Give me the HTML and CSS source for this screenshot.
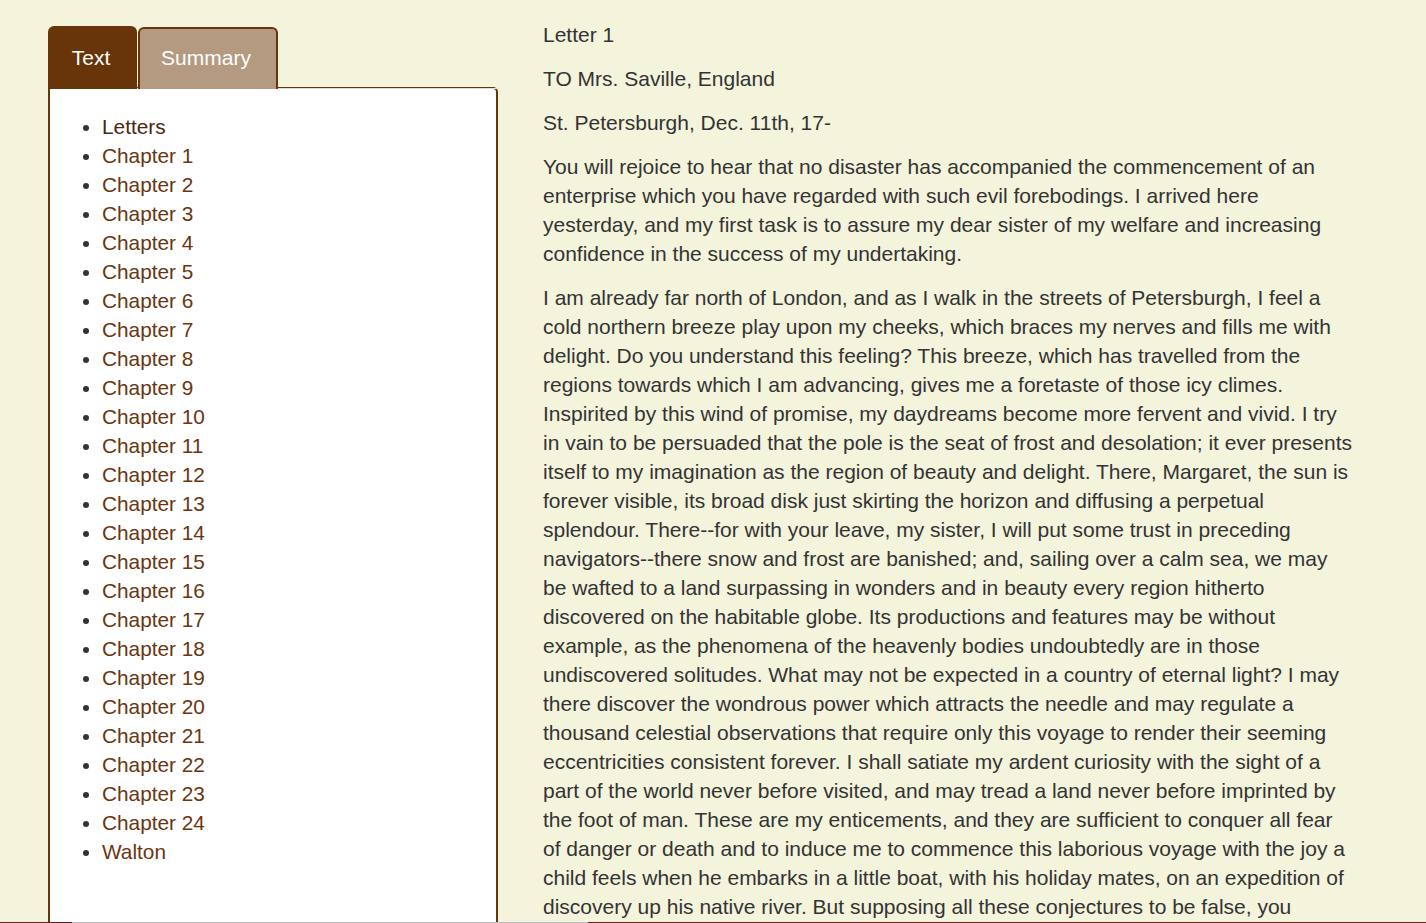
FILE: index.html
```html
<!DOCTYPE html>
<html lang="en">
<head>
<meta charset="utf-8">
<title>Frankenstein - Letter 1</title>
<link rel="stylesheet" href="styles.css">
</head>
<body>
<div class="page">
  <aside class="sidebar">
    <div class="tabs">
      <div class="tab tab-active">Text</div>
      <div class="tab tab-inactive">Summary</div>
    </div>
    <div class="panel">
      <ul class="toc">
        <li><a class="current" href="#">Letters</a></li>
        <li><a href="#">Chapter 1</a></li>
        <li><a href="#">Chapter 2</a></li>
        <li><a href="#">Chapter 3</a></li>
        <li><a href="#">Chapter 4</a></li>
        <li><a href="#">Chapter 5</a></li>
        <li><a href="#">Chapter 6</a></li>
        <li><a href="#">Chapter 7</a></li>
        <li><a href="#">Chapter 8</a></li>
        <li><a href="#">Chapter 9</a></li>
        <li><a href="#">Chapter 10</a></li>
        <li><a href="#">Chapter 11</a></li>
        <li><a href="#">Chapter 12</a></li>
        <li><a href="#">Chapter 13</a></li>
        <li><a href="#">Chapter 14</a></li>
        <li><a href="#">Chapter 15</a></li>
        <li><a href="#">Chapter 16</a></li>
        <li><a href="#">Chapter 17</a></li>
        <li><a href="#">Chapter 18</a></li>
        <li><a href="#">Chapter 19</a></li>
        <li><a href="#">Chapter 20</a></li>
        <li><a href="#">Chapter 21</a></li>
        <li><a href="#">Chapter 22</a></li>
        <li><a href="#">Chapter 23</a></li>
        <li><a href="#">Chapter 24</a></li>
        <li><a href="#">Walton</a></li>
      </ul>
    </div>
  </aside>
  <main class="content">
    <p>Letter 1</p>
    <p>TO Mrs. Saville, England</p>
    <p>St. Petersburgh, Dec. 11th, 17-</p>
    <p>You will rejoice to hear that no disaster has accompanied the commencement of an enterprise which you have regarded with such evil forebodings. I arrived here yesterday, and my first task is to assure my dear sister of my welfare and increasing confidence in the success of my undertaking.</p>
    <p>I am already far north of London, and as I walk in the streets of Petersburgh, I feel a cold northern breeze play upon my cheeks, which braces my nerves and fills me with delight. Do you understand this feeling? This breeze, which has travelled from the regions towards which I am advancing, gives me a foretaste of those icy climes. Inspirited by this wind of promise, my daydreams become more fervent and vivid. I try in vain to be persuaded that the pole is the seat of frost and desolation; it ever presents itself to my imagination as the region of beauty and delight. There, Margaret, the sun is forever visible, its broad disk just skirting the horizon and diffusing a perpetual splendour. There--for with your leave, my sister, I will put some trust in preceding navigators--there snow and frost are banished; and, sailing over a calm sea, we may be wafted to a land surpassing in wonders and in beauty every region hitherto discovered on the habitable globe. Its productions and features may be without example, as the phenomena of the heavenly bodies undoubtedly are in those undiscovered solitudes. What may not be expected in a country of eternal light? I may there discover the wondrous power which attracts the needle and may regulate a thousand celestial observations that require only this voyage to render their seeming eccentricities consistent forever. I shall satiate my ardent curiosity with the sight of a part of the world never before visited, and may tread a land never before imprinted by the foot of man. These are my enticements, and they are sufficient to conquer all fear of danger or death and to induce me to commence this laborious voyage with the joy a child feels when he embarks in a little boat, with his holiday mates, on an expedition of discovery up his native river. But supposing all these conjectures to be false, you cannot contest the inestimable benefit which I shall confer on all mankind, to the last generation, by discovering a passage near the pole to those countries, to reach which at present so many months are requisite; or by ascertaining the secret of the magnet, which, if at all possible, can only be effected by an undertaking such as mine.</p>
  </main>
</div>
<div class="footer-line"></div>
</body>
</html>
```

FILE: styles.css
```css
html, body {
  margin: 0;
  padding: 0;
  background: #f4f3dc;
}

body {
  font-family: "Liberation Sans", Arial, sans-serif;
  font-size: 20.8px;
  line-height: 29px;
  color: #333333;
}

.page {
  display: flex;
  align-items: flex-start;
  gap: 45px;
  padding-left: 48px;
}

.sidebar {
  width: 450px;
  flex: none;
  padding-top: 26px;
}

.tabs {
  display: flex;
  align-items: flex-end;
  gap: 1px;
  height: 62px;
  border-bottom: 1px solid #dddddd;
  margin-bottom: -2px;
  position: relative;
  z-index: 1;
  width: 450px;
}

.tab {
  box-sizing: border-box;
  display: flex;
  align-items: center;
  justify-content: center;
  color: #ffffff;
  font-size: 21px;
  border-radius: 6px 6px 0 0;
}

.tab-active {
  width: 89px;
  height: 63px;
  background: #683409;
  margin-bottom: -1px;
  padding-right: 3px;
}

.tab-inactive {
  width: 140px;
  height: 62px;
  background: #b59a82;
  border: 2px solid #683409;
  border-bottom: none;
  padding-right: 4px;
  padding-bottom: 4px;
  margin-bottom: -1px;
}

.panel {
  box-sizing: border-box;
  width: 450px;
  height: 900px;
  background: #ffffff;
  border: 2px solid #683409;
  border-radius: 0 5px 0 0;
  padding: 2px 12px 0;
  position: relative;
}

.toc {
  margin: 20.8px 0;
  padding-left: 40px;
}

.toc li {
  color: #333333;
}

.toc a {
  color: #6b3510;
  text-decoration: none;
}

.toc a.current {
  color: #4b2710;
}

.content {
  width: 811px;
  flex: none;
  padding-top: 20px;
  font-size: 21px;
}

.content p {
  margin: 0 0 15px;
}

.footer-line {
  position: fixed;
  left: 0;
  right: 0;
  bottom: 0;
  height: 1px;
  background: linear-gradient(to right, #6e1c1c 0, #6e1c1c 72px, #bbbbbb 72px, #bbbbbb 588px, #6e1c1c 588px);
  z-index: 5;
}
```
